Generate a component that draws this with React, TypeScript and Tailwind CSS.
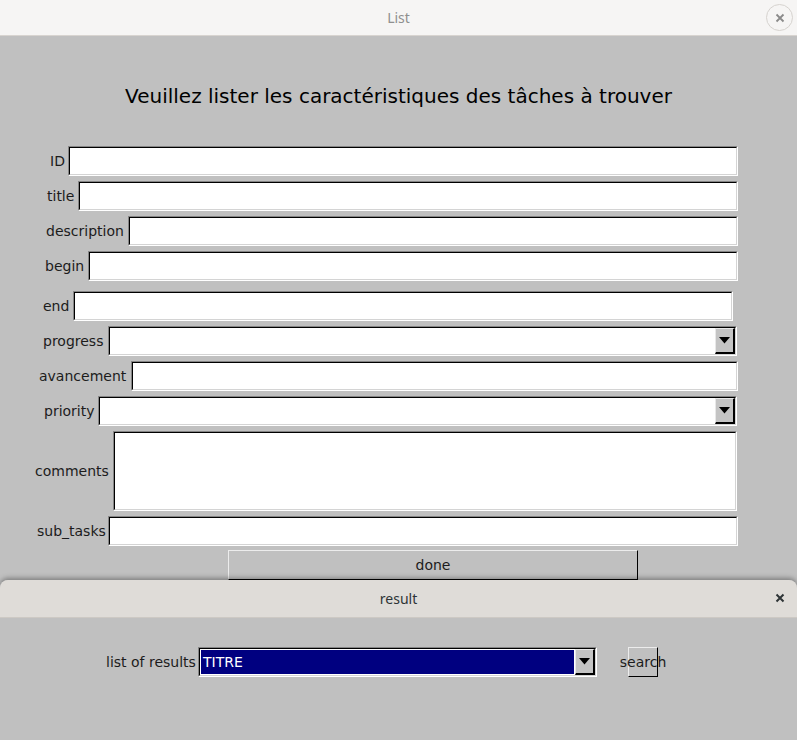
import React from "react";

const FONT = { fontFamily: '"DejaVu Sans", "Liberation Sans", sans-serif' };

function Sunken({ className = "", innerClass = "bg-white", children }: { className?: string; innerClass?: string; children?: React.ReactNode }) {
  return (
    <div className={`border border-t-[#858585] border-l-[#858585] border-b-white border-r-white flex ${className}`}>
      <div className={`flex-1 flex border border-t-black border-l-black border-b-[#d4d4d4] border-r-[#d4d4d4] ${innerClass}`}>{children}</div>
    </div>
  );
}

function Arrow() {
  return (
    <div className="w-[20px] h-full flex items-center justify-center bg-[#c4c4c4] border border-t-[#e8e8e8] border-l-[#e8e8e8] border-b-black border-r-black border-b-2 border-r-2">
      <svg width="11" height="7" viewBox="0 0 11 7">
        <polygon points="0,0 11,0 5.5,6.5" fill="#000" />
      </svg>
    </div>
  );
}

function Row({ label, lx, ex, pr, h = 30, combo = false, mt = 5 }: { label: string; lx: number; ex: number; pr: number; h?: number; combo?: boolean; mt?: number }) {
  return (
    <div className="flex items-center shrink-0" style={{ paddingLeft: lx, paddingRight: pr, marginTop: mt, height: h }}>
      <span className="text-[14px] text-[#1c1c1c] whitespace-nowrap shrink-0" style={{ width: ex - lx }}>{label}</span>
      <Sunken className="flex-1 h-full">
        {combo ? (
          <div className="flex-1 flex justify-end">
            <Arrow />
          </div>
        ) : null}
      </Sunken>
    </div>
  );
}

export default function App() {
  return (
    <div className="w-[797px] h-[740px] bg-[#c0c0c0] flex flex-col overflow-hidden" style={FONT}>
      {/* Main window title bar */}
      <div className="h-[36px] shrink-0 bg-[#f6f5f4] border-b border-[#d8d4d0] relative flex items-center justify-center">
        <span className="text-[14px] text-[#8f8f8f]" style={{ fontFamily: '"Noto Sans", sans-serif' }}>List</span>
        <div className="absolute right-[4px] top-[4px] w-[27px] h-[27px] rounded-full border border-[#d6d3cf] flex items-center justify-center">
          <svg width="10" height="10" viewBox="0 0 10 10">
            <path d="M1.5 1.5 L8.5 8.5 M8.5 1.5 L1.5 8.5" stroke="#8a8a8a" strokeWidth="1.8" />
          </svg>
        </div>
      </div>

      {/* Main window body */}
      <div className="h-[544px] shrink-0 flex flex-col">
        <div className="mt-[48px] h-[24px] shrink-0 flex items-center justify-center text-[20px] text-black leading-[24px]">
          Veuillez lister les caractéristiques des tâches à trouver
        </div>
        <Row label="ID" lx={50} ex={68} pr={59} mt={38} />
        <Row label="title" lx={47} ex={78} pr={59} />
        <Row label="description" lx={46} ex={128} pr={59} />
        <Row label="begin" lx={45} ex={88} pr={59} />
        <Row label="end" lx={43} ex={73} pr={64} mt={10} />
        <Row label="progress" lx={43} ex={108} pr={60} combo />
        <Row label="avancement" lx={39} ex={131} pr={59} />
        <Row label="priority" lx={44} ex={98} pr={60} combo />
        <Row label="comments" lx={35} ex={113} pr={60} h={80} />
        <Row label="sub_tasks" lx={37} ex={108} pr={59} />
        <div className="mt-[4px] shrink-0 flex justify-start pl-[228px]">
          <div className="w-[410px] h-[30px] bg-[#c0c0c0] border border-t-[#ececec] border-l-[#ececec] border-b-black border-r-black flex items-center justify-center text-[14px] text-[#1c1c1c]">
            done
          </div>
        </div>
      </div>

      {/* Result window */}
      <div className="flex-1 flex flex-col rounded-t-[8px] overflow-hidden shadow-[0_-2px_5px_rgba(0,0,0,0.35)] relative">
        <div className="h-[38px] shrink-0 bg-[#dfdcd8] border-b border-[#cdc9c4] relative flex items-center justify-center">
          <span className="text-[14px] text-[#2e3436]" style={{ fontFamily: '"Noto Sans", sans-serif' }}>result</span>
          <div className="absolute right-[12px] top-[13px]">
            <svg width="10" height="10" viewBox="0 0 10 10">
              <path d="M1.5 1.5 L8.5 8.5 M8.5 1.5 L1.5 8.5" stroke="#2e3436" strokeWidth="2" />
            </svg>
          </div>
        </div>
        <div className="flex-1 bg-[#c0c0c0] flex flex-col">
          <div className="mt-[29px] h-[30px] flex items-center pl-[106px]">
            <span className="text-[14px] text-[#1c1c1c] whitespace-nowrap shrink-0 w-[92px]">list of results</span>
            <Sunken className="w-[399px] h-[30px]" innerClass="bg-white">
              <div className="flex-1 m-[1px] bg-[#000080] flex items-center text-white text-[14px] pl-[2px]">TITRE</div>
              <Arrow />
            </Sunken>
            <div className="ml-[31px] w-[30px] h-[30px] bg-[#c0c0c0] border border-t-[#ececec] border-l-[#ececec] border-b-black border-r-black flex items-center justify-center overflow-visible">
              <span className="text-[14px] text-[#1c1c1c] whitespace-nowrap">search</span>
            </div>
          </div>
        </div>
      </div>
    </div>
  );
}
